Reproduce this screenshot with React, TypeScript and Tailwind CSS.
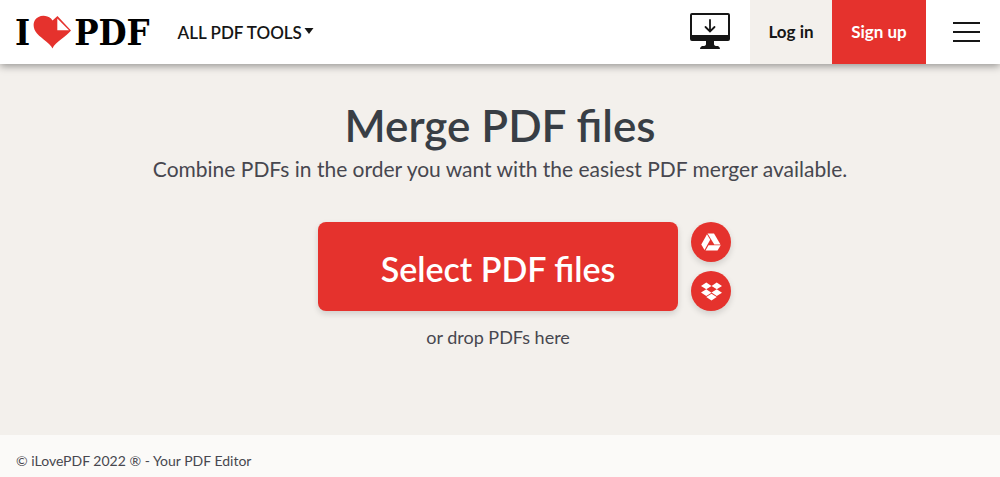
import { FaDropbox } from "react-icons/fa"

function Logo() {
  return (
    <a
      href="#"
      aria-label="iLovePDF"
      className="flex items-center font-['DejaVu_Serif_Condensed','DejaVu_Serif',serif] text-4xl font-bold leading-none text-black"
    >
      <span>I</span>
      <svg viewBox="0 0 38 34" className="ml-[3px] h-[34px] w-[38px]" aria-hidden="true">
        <path
          d="M19.5 33.5C17 28 9.5 24.5 4 18.5C0.5 14.5-0.5 9 2 5C5 0 13-1 18 3.5L19.5 5.5L24.5 1L38 15.5C34 21 22 27 19.5 33.5Z"
          fill="#e5322d"
        />
        <path d="M24.3 3.5V15.2H36Z" fill="#fff" />
      </svg>
      <span className="ml-[3px]">PDF</span>
    </a>
  )
}

function DesktopIcon() {
  return (
    <svg viewBox="0 0 40 36" className="h-9 w-10" aria-hidden="true">
      <path
        fillRule="evenodd"
        d="M2 0H38Q40 0 40 2V26Q40 28 38 28H24V31Q24 33 27 33H28Q30 34 30 36H10Q10 34 12 33H13Q16 33 16 31V28H2Q0 28 0 26V2Q0 0 2 0ZM2 2V22H38V2Z"
        fill="#161616"
      />
      <path
        d="M20 7V18M15.5 14L20 18.5L24.5 14"
        fill="none"
        stroke="#161616"
        strokeWidth="1.8"
        strokeLinecap="round"
      />
    </svg>
  )
}

function DriveIcon() {
  return (
    <svg viewBox="0 0 20 18" className="h-[18px] w-5" aria-hidden="true">
      <path d="M6.5 0.5H13L19.5 11.5H13.3Z" fill="#fff" />
      <path d="M6 1.2L9.2 6.7L3.5 17L0.3 11.5Z" fill="#fff" />
      <path d="M7.5 12.3H19.7L16.5 17.5H4.5Z" fill="#fff" />
    </svg>
  )
}

function Header() {
  return (
    <header className="relative flex h-16 items-center bg-white pl-[15px] text-[17px] text-[#161616] shadow-[0_2px_8px_rgba(0,0,0,0.4)]">
      <Logo />
      <nav className="ml-7">
        <a href="#" className="flex items-center gap-0.5 pt-0.5 font-semibold">
          ALL PDF TOOLS
          <svg viewBox="0 0 10 6" className="mb-1 h-1.5 w-2.5" aria-hidden="true">
            <path d="M0.5 0H9.5L5 6Z" fill="#161616" />
          </svg>
        </a>
      </nav>
      <div className="ml-auto flex h-full items-center">
        <a href="#" aria-label="Download desktop app" className="mr-5 -mt-0.5">
          <DesktopIcon />
        </a>
        <a href="#" className="flex h-full w-[82px] items-center justify-center bg-[#f3f0ec] font-bold">
          Log in
        </a>
        <a href="#" className="flex h-full w-[94px] items-center justify-center bg-[#e5322d] font-bold text-white">
          Sign up
        </a>
        <button type="button" aria-label="Menu" className="flex w-[74px] flex-col items-center gap-[7px] pl-1.5">
          <span className="h-0.5 w-[27px] bg-[#161616]" />
          <span className="h-0.5 w-[27px] bg-[#161616]" />
          <span className="h-0.5 w-[27px] bg-[#161616]" />
        </button>
      </div>
    </header>
  )
}

function Uploader() {
  return (
    <div className="mt-[39px] flex flex-col items-center">
      <div className="flex items-stretch gap-[13px] pl-[49px]">
        <button
          type="button"
          className="h-[89px] w-[360px] rounded-lg bg-[#e5322d] pt-1 text-[34px] font-semibold text-white shadow-[0_3px_6px_rgba(0,0,0,0.14)]"
        >
          Select PDF files
        </button>
        <div className="flex flex-col justify-between">
          <button
            type="button"
            aria-label="Select from Google Drive"
            className="flex size-10 items-center justify-center rounded-full bg-[#e5322d] shadow-[0_3px_6px_rgba(0,0,0,0.14)]"
          >
            <DriveIcon />
          </button>
          <button
            type="button"
            aria-label="Select from Dropbox"
            className="flex size-10 items-center justify-center rounded-full bg-[#e5322d] text-white shadow-[0_3px_6px_rgba(0,0,0,0.14)]"
          >
            <FaDropbox className="size-[21px]" />
          </button>
        </div>
      </div>
      <p className="mt-3.5 pr-1 text-lg leading-6 text-[#47474f]">or drop PDFs here</p>
    </div>
  )
}

export default function App() {
  return (
    <div className="flex min-h-screen flex-col bg-[#f3f0ec] font-[Lato,sans-serif]">
      <Header />
      <main className="flex-1 px-4 pt-[35px] pb-16 text-center">
        <h1 className="text-[44px] font-semibold leading-[52px] text-[#383e45]">Merge PDF files</h1>
        <h2 className="mt-1 text-[21px] leading-7 text-[#47474f]">
          Combine PDFs in the order you want with the easiest PDF merger available.
        </h2>
        <Uploader />
      </main>
      <footer className="flex h-[42px] items-center bg-[#fbfaf8] px-4 pt-2.5 text-sm text-[#47474f]">
        © iLovePDF 2022 ® - Your PDF Editor
      </footer>
    </div>
  )
}
